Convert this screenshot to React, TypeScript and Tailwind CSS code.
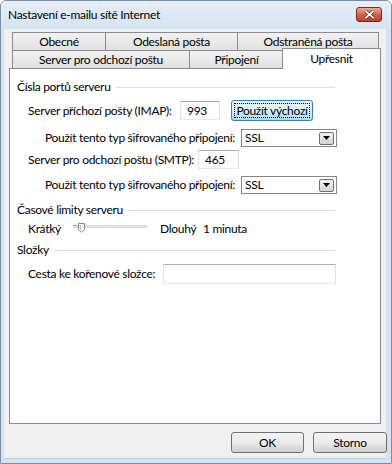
import React from "react";

const font = { fontFamily: "Lato, 'Noto Sans', sans-serif" };

function GroupHeader({ title }: { title: string }) {
    return (
        <div className="flex items-center h-[16px] w-[318px] ml-[7px]">
            <span className="whitespace-nowrap">{title}</span>
            <div className="flex-1 h-px bg-[#d5dfe5] ml-[5px]" />
        </div>
    );
}

function TextBox({ value, className }: { value?: string; className: string }) {
    return (
        <div className={`shrink-0 bg-white border border-[#abadb3] border-l-[#e2e3ea] border-b-[#e3e9ef] border-r-[#dbdfe6] flex items-center pl-[6px] ${className}`}>
            {value}
        </div>
    );
}

function Select({ value }: { value: string }) {
    return (
        <div className="shrink-0 w-[96px] h-[18px] bg-white border border-[#828790] flex items-center justify-between pl-[3px] pr-[2px]">
            <span>{value}</span>
            <div className="w-[15px] h-[13px] border border-[#707070] rounded-[2px] bg-gradient-to-b from-[#f2f2f2] to-[#d4d4d4] flex items-center justify-center">
                <svg width="7" height="4" viewBox="0 0 7 4">
                    <path d="M0 0h7L3.5 4z" fill="#000" />
                </svg>
            </div>
        </div>
    );
}

function Tab({ label, w, selected }: { label: string; w: string; selected?: boolean }) {
    if (selected) {
        return (
            <div className={`${w} h-[21px] -ml-[2px] -mb-px relative z-10 bg-white border border-b-0 border-[#898c95] flex items-start justify-center pt-[1px]`}>
                {label}
            </div>
        );
    }
    return (
        <div className={`${w} h-[18px] -ml-px first:ml-0 border border-b-0 border-[#898c95] bg-gradient-to-b from-[#f2f2f2] to-[#e1e1e1] flex items-center justify-center`}>
            {label}
        </div>
    );
}

function Slider() {
    return (
        <svg className="shrink-0" width="74" height="14" viewBox="0 0 74 14">
            <rect x="0.5" y="3.5" width="73" height="2" fill="#e7eaea" stroke="#d6d6d6" />
            <path d="M0 3.5h4" stroke="#a0a0a0" />
            <path d="M5.5 1.5h6v6l-3 3l-3-3z" fill="#f4f4f4" stroke="#8a8a8a" />
            <path d="M7.5 3v5" stroke="#c0c0c0" />
        </svg>
    );
}

function WinButton({ label, w }: { label: string; w: string }) {
    return (
        <div className={`${w} h-[21px] rounded-[3px] border border-[#707070] bg-gradient-to-b from-[#f2f2f2] via-[#ebebeb] to-[#cfcfcf] flex items-center justify-center`}>
            {label}
        </div>
    );
}

export default function App() {
    return (
        <div className="w-[392px] h-[464px] bg-[#d3e1f1] border border-[#7a8ea8] rounded-t-[6px] flex flex-col overflow-hidden text-[12px] tracking-[-0.3px] text-black" style={font}>
            {/* Title bar */}
            <div className="h-[28px] flex items-center justify-between pl-[7px] pr-[9px] bg-gradient-to-b from-[#e6eef8] to-[#d6e3f2]">
                <span>Nastavení e-mailu sítě Internet</span>
                <div className="w-[26px] h-[15px] mt-[-2px] rounded-[3px] border border-[#7d2b1f] bg-gradient-to-b from-[#e9a99a] via-[#d0644e] to-[#c13c24] flex items-center justify-center">
                    <svg width="11" height="9" viewBox="0 0 11 9">
                        <path d="M1.5 1l8 7M9.5 1l-8 7" stroke="#4a1a12" strokeWidth="3.2" />
                        <path d="M1.5 1l8 7M9.5 1l-8 7" stroke="#fff" strokeWidth="1.8" />
                    </svg>
                </div>
            </div>

            {/* Client area */}
            <div className="flex-1 ml-[3px] mr-[5px] mb-[4px] bg-[#f0f0f0] border-b border-[#a8d4ea] flex flex-col pl-[5px] pt-[3px]">
                {/* Tabs */}
                <div className="ml-[3px] flex">
                    <Tab label="Obecné" w="w-[94px]" />
                    <Tab label="Odeslaná pošta" w="w-[133px]" />
                    <Tab label="Odstraněná pošta" w="w-[142px]" />
                </div>
                <div className="ml-[3px] flex items-end h-[20px] -mt-[2px]">
                    <Tab label="Server pro odchozí poštu" w="w-[178px]" />
                    <Tab label="Připojení" w="w-[95px]" />
                    <Tab label="Upřesnit" w="w-[99px]" selected />
                </div>

                {/* Panel */}
                <div className="w-[372px] h-[356px] bg-white border border-[#898c95] pt-[10px] flex flex-col">
                    <GroupHeader title="Čísla portů serveru" />
                    <div className="flex items-center h-[21px] mt-[5px] pl-[18px]">
                        <span className="w-[152px] shrink-0 whitespace-nowrap">Server příchozí pošty (IMAP):</span>
                        <TextBox value="993" className="w-[40px] h-[19px]" />
                        <div className="shrink-0 ml-[11px] w-[82px] h-[21px] rounded-[3px] border border-[#3c7fb1] bg-gradient-to-b from-[#eaf6fd] via-[#d9f0fc] to-[#a7d9f5] p-[2px]">
                            <div className="w-full h-full border border-dotted border-[#000] flex items-center justify-center whitespace-nowrap">Použít výchozí</div>
                        </div>
                    </div>
                    <div className="flex items-center h-[18px] mt-[8px] pl-[35px]">
                        <span className="w-[196px] shrink-0 whitespace-nowrap">Použít tento typ šifrovaného připojení:</span>
                        <Select value="SSL" />
                    </div>
                    <div className="flex items-center h-[19px] mt-[3px] pl-[18px]">
                        <span className="w-[170px] shrink-0 whitespace-nowrap">Server pro odchozí poštu (SMTP):</span>
                        <TextBox value="465" className="w-[41px] h-[19px]" />
                    </div>
                    <div className="flex items-center h-[18px] mt-[7px] pl-[35px]">
                        <span className="w-[196px] shrink-0 whitespace-nowrap">Použít tento typ šifrovaného připojení:</span>
                        <Select value="SSL" />
                    </div>

                    <div className="mt-[8px]">
                        <GroupHeader title="Časové limity serveru" />
                    </div>
                    <div className="flex items-center h-[16px] mt-[3px] pl-[18px]">
                        <span className="w-[45px] shrink-0">Krátký</span>
                        <Slider />
                        <span className="ml-[13px] w-[43px] shrink-0">Dlouhý</span>
                        <span>1 minuta</span>
                    </div>

                    <div className="mt-[5px]">
                        <GroupHeader title="Složky" />
                    </div>
                    <div className="flex items-center h-[20px] mt-[6px] pl-[18px]">
                        <span className="w-[135px] shrink-0 whitespace-nowrap">Cesta ke kořenové složce:</span>
                        <TextBox className="w-[173px] h-[20px]" />
                    </div>
                </div>

                {/* Buttons */}
                <div className="flex justify-end gap-[9px] mt-[8px] -mr-[1px]">
                    <WinButton label="OK" w="w-[73px]" />
                    <WinButton label="Storno" w="w-[74px]" />
                </div>
            </div>
        </div>
    );
}
